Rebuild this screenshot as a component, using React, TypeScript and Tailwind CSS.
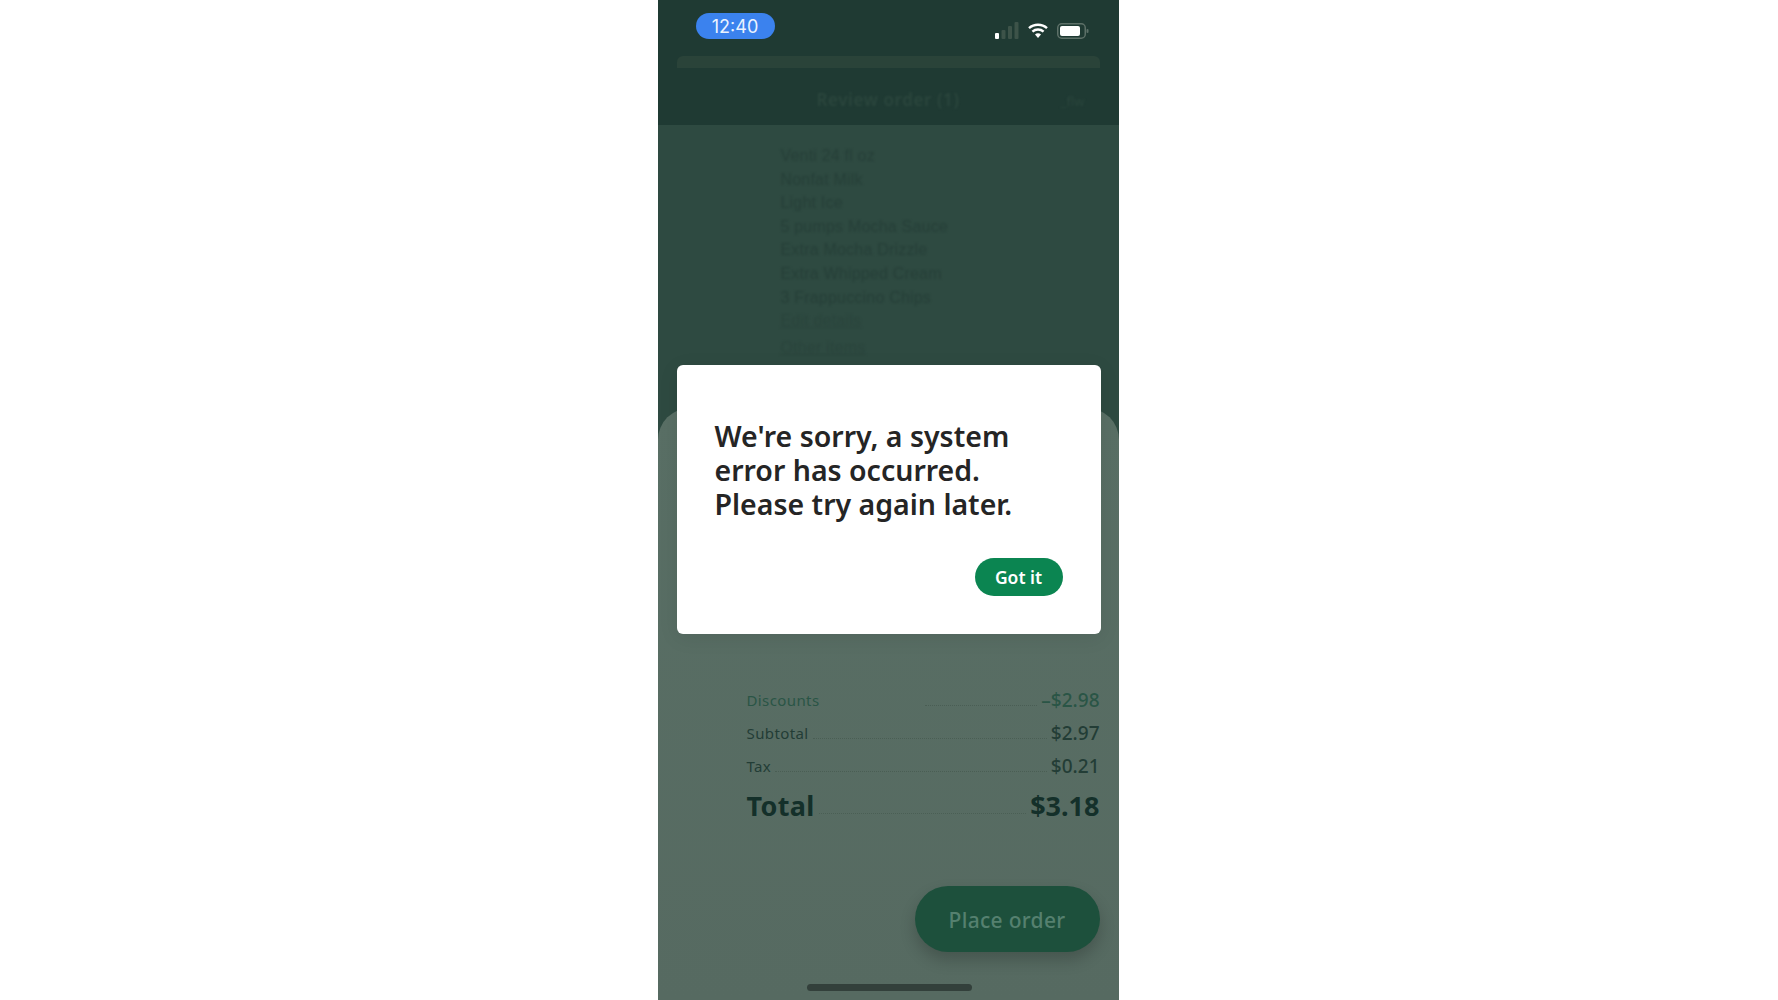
const items = [
  "Venti 24 fl oz",
  "Nonfat Milk",
  "Light Ice",
  "5 pumps Mocha Sauce",
  "Extra Mocha Drizzle",
  "Extra Whipped Cream",
  "3 Frappuccino Chips",
];

function StatusIcons() {
  return (
    <div className="flex items-center gap-[9px]">
      <svg width="24" height="17" viewBox="0 0 24 17">
        <rect x="0" y="11" width="4" height="6" rx="1" fill="#ffffff" />
        <rect x="6.5" y="8" width="4" height="9" rx="1" fill="#3d5349" />
        <rect x="13" y="4" width="4" height="13" rx="1" fill="#3d5349" />
        <rect x="19.5" y="0" width="4" height="17" rx="1" fill="#3d5349" />
      </svg>
      <svg width="20" height="15" viewBox="0 0 20 15" fill="none" stroke="#ffffff" strokeWidth="2.4">
        <path d="M1 5.2C6 .6 14 .6 19 5.2" />
        <path d="M4.4 8.6c3.2-2.9 8-2.9 11.2 0" />
        <path d="M10 15l-3-3.6c1.7-1.4 4.3-1.4 6 0z" fill="#ffffff" stroke="none" />
      </svg>
      <svg width="32" height="16" viewBox="0 0 32 16" fill="none">
        <rect x="0.75" y="0.75" width="27.5" height="14.5" rx="4" stroke="#5d7068" strokeWidth="1.5" />
        <rect x="3" y="3" width="20" height="10" rx="2" fill="#ffffff" />
        <rect x="29.5" y="6" width="2" height="4" rx="1" fill="#5d7068" />
      </svg>
    </div>
  );
}

function PriceRow({ label, value, color, dots }: { label: string; value: string; color: string; dots: string }) {
  return (
    <div className="flex h-[33px] items-center justify-between gap-1 text-[15px] tracking-[0.4px]">
      <span style={{ color }}>{label}</span>
      <span className={`mt-[10px] border-b border-dotted border-[#4a5e54] ${dots}`} />
      <span className="text-[19px] font-medium tracking-normal" style={{ color }}>{value}</span>
    </div>
  );
}

export default function App() {
  return (
    <div className="flex h-screen justify-center overflow-hidden bg-white pr-[2px] font-['Noto_Sans',sans-serif]">
      <div className="relative flex h-[1000px] w-[461px] flex-col overflow-hidden bg-[#2e4a41]">
        <header className="h-[125px] bg-[#1f3a33]">
          <div className="flex h-[56px] items-start justify-between pl-[38px] pr-[30px] pt-[13px]">
            <div className="flex h-[26px] w-[79px] items-center justify-center rounded-full bg-[#3b82ee] pt-[1px] font-['Inter',sans-serif] text-[18px] text-[#eaf3ff]">
              12:40
            </div>
            <div className="pt-[9px]">
              <StatusIcons />
            </div>
          </div>
          <div className="mx-[19px] h-[12px] rounded-t-md bg-[#2a4339]" />
          <div className="relative flex h-[57px] items-center justify-center pt-[6px] blur-[1px]">
            <span className="text-[17px] font-semibold tracking-[0.6px] text-[#2b463d]">Review order (1)</span>
            <span className="absolute right-[34px] top-[24px] text-[13px] text-[#2b463d]">_flw</span>
          </div>
        </header>

        <section className="h-[283px] pl-[123px] pt-[19px] font-['Liberation_Sans',sans-serif] text-[16px] leading-[23.6px] tracking-[0.2px] text-[#263f38] blur-[1px]">
          {items.map((item) => (
            <div key={item}>{item}</div>
          ))}
          <div className="w-fit text-[#2a443c] underline">Edit details</div>
          <div className="mt-[3px] w-fit text-[#2a443c] underline">Other items</div>
        </section>

        <section className="flex flex-1 flex-col rounded-t-[32px] bg-gradient-to-b from-[#596f65] to-[#566a61] pl-[89px] pr-[19px] pt-[276px]">
          <PriceRow label="Discounts" value="–$2.98" color="#2a5546" dots="ml-auto w-[112px]" />
          <PriceRow label="Subtotal" value="$2.97" color="#233d36" dots="flex-1" />
          <PriceRow label="Tax" value="$0.21" color="#233d36" dots="flex-1" />
          <div className="flex h-[46px] items-center justify-between gap-1">
            <span className="text-[27px] font-bold tracking-[0.3px] text-[#14302a]">Total</span>
            <span className="mt-[14px] flex-1 border-b border-dotted border-[#4a5e54]" />
            <span className="text-[27px] font-bold text-[#14302a]">$3.18</span>
          </div>
          <div className="mt-[57px] flex justify-end">
            <div className="flex h-[66px] w-[185px] items-center justify-center rounded-full bg-[#1d503c] pt-[3px] text-[21px] font-medium tracking-[0.3px] text-[#55806f] shadow-[0_8px_16px_rgba(0,0,0,0.2)]">
              Place order
            </div>
          </div>
        </section>

        <div className="absolute bottom-[9px] left-[149px] h-[7px] w-[165px] rounded-full bg-[#33403b]" />

        <div className="absolute left-[19px] top-[365px] flex h-[269px] w-[424px] flex-col rounded-[6px] bg-white px-[38px] pt-[54px] shadow-[0_4px_20px_rgba(0,0,0,0.08)]">
          <p className="text-[28.5px] font-semibold leading-[34px] text-[#252525]">
            We're sorry, a system
            <br />
            error has occurred.
            <br />
            Please try again later.
          </p>
          <div className="mt-[37px] flex justify-end">
            <button className="h-[38px] w-[88px] rounded-full bg-[#0b8551] pt-[1px] text-[17.5px] font-semibold text-white">
              Got it
            </button>
          </div>
        </div>
      </div>
    </div>
  );
}
